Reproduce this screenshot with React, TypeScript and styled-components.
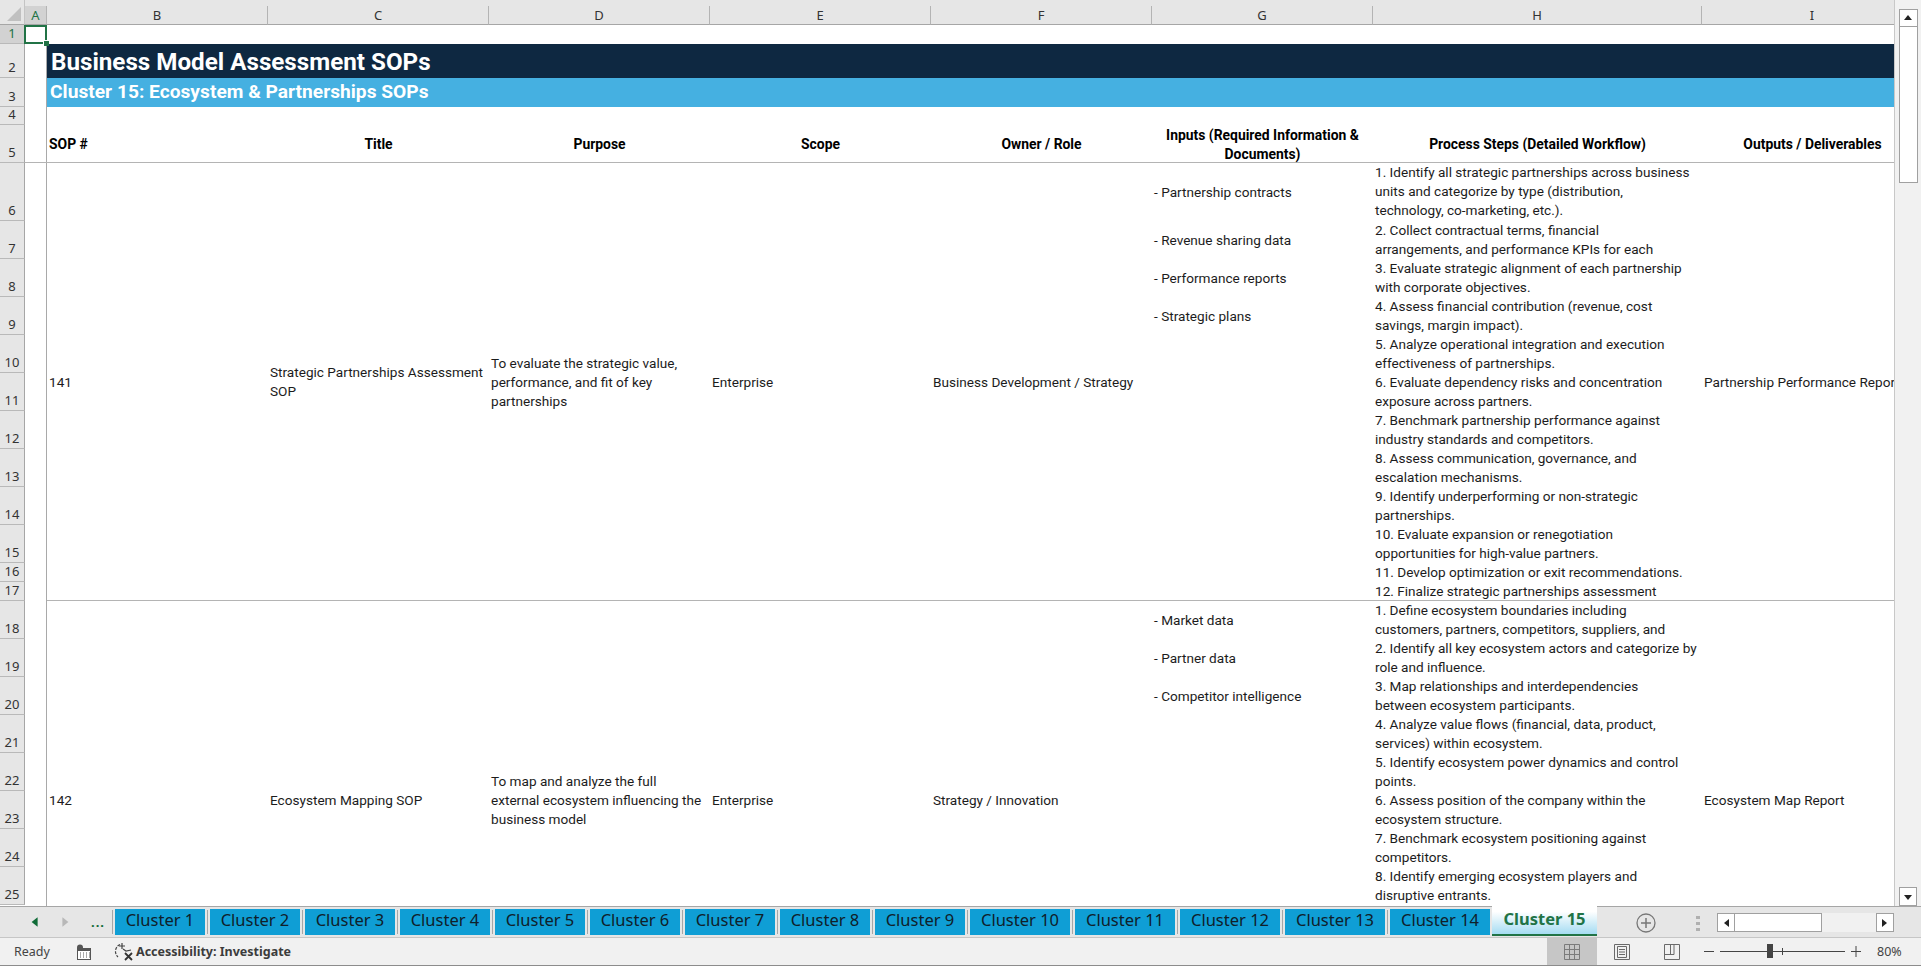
import * as React from 'react'
import styled, { createGlobalStyle } from 'styled-components'

const GlobalStyle = createGlobalStyle`
  html, body {
    margin: 0;
    padding: 0;
    background: #e6e6e6;
    overflow: hidden;
  }
`

const CELL_FONT = '"Roboto", "Liberation Sans", sans-serif'
const UI_FONT = '"Noto Sans", "Open Sans", sans-serif'
const GREEN = '#217346'

const rowTracks = [6, 19, 19, 34, 29, 18, 38, 58, 38, 38, 38, 38, 38, 38, 38, 38, 38, 19, 19, 38, 38, 38, 38, 38, 38, 38, 38, 94]
const colTracks = [25, 22, 221, 221, 221, 221, 221, 221, 329, 221]
const rowNumberLabels = Array.from({ length: 25 }, (_, i) => i + 1)
const columnLetters = ['A', 'B', 'C', 'D', 'E', 'F', 'G', 'H', 'I']

// grid line of sheet row n (tracks 1 and 2 are the column header)
const line = (row: number) => row + 2

const Window = styled.div`
  display: flex;
  flex-direction: column;
  width: 1921px;
  height: 966px;
  overflow: hidden;
  background: #e6e6e6;
`

const Main = styled.div`
  display: flex;
  height: 906px;
  flex-shrink: 0;
`

const SheetViewport = styled.div`
  width: 1894px;
  height: 906px;
  overflow: hidden;
`

const SheetGrid = styled.div`
  display: grid;
  grid-template-columns: ${colTracks.map(c => `${c}px`).join(' ')};
  grid-template-rows: ${rowTracks.map(r => `${r}px`).join(' ')};
  background: #ffffff;
  color: #1c1c1c;
  font-family: ${CELL_FONT};
  font-size: 13.6px;
  line-height: 19px;
`

const Corner = styled.div`
  grid-column: 1;
  grid-row: 1 / span 2;
  background: #e6e6e6;
  border-bottom: 1px solid #a6a6a6;
  border-right: 1px solid #c4c4c4;
  box-sizing: border-box;
  display: flex;
  align-items: flex-end;
  justify-content: flex-end;
  padding: 0 3px 3px 0;
`

const TopStrip = styled.div`
  grid-column: 2 / -1;
  grid-row: 1;
  background: #e6e6e6;
`

const ColumnHeader = styled.div<{ $col: number; $active?: boolean }>`
  grid-column: ${p => p.$col + 1};
  grid-row: 2;
  box-sizing: border-box;
  display: flex;
  align-items: center;
  justify-content: center;
  background: ${p => (p.$active ? '#d2d2d2' : '#e6e6e6')};
  color: ${p => (p.$active ? GREEN : '#333333')};
  border-right: 1px solid #b4b4b4;
  border-bottom: 1px solid #a6a6a6;
  font-family: ${UI_FONT};
  font-size: 13px;
`

const RowHeader = styled.div<{ $row: number; $active?: boolean }>`
  grid-column: 1;
  grid-row: ${p => line(p.$row)};
  box-sizing: border-box;
  display: flex;
  align-items: flex-end;
  justify-content: center;
  background: ${p => (p.$active ? '#d2d2d2' : '#e6e6e6')};
  color: ${p => (p.$active ? GREEN : '#333333')};
  border-right: 1px solid #a6a6a6;
  border-bottom: 1px solid #b9b9b9;
  font-family: ${UI_FONT};
  font-size: 13px;
  line-height: 19px;
`

const LeftGutterLine = styled.div`
  grid-column: 2;
  grid-row: 3 / -1;
  border-right: 1px solid #a9a9a9;
`

const SelectedCell = styled.div`
  grid-column: 2;
  grid-row: 3;
  position: relative;
  margin-left: -1px;
  box-sizing: border-box;
  border: 2px solid ${GREEN};
  z-index: 2;

  &::after {
    content: '';
    position: absolute;
    right: -4px;
    bottom: -4px;
    width: 5px;
    height: 5px;
    background: ${GREEN};
    border: 1px solid #ffffff;
    border-width: 1px 0 0 1px;
  }
`

const TitleBanner = styled.div`
  grid-column: 3 / -1;
  grid-row: 4;
  display: flex;
  align-items: center;
  padding: 2px 0 0 4px;
  background: #0e2841;
  color: #ffffff;
  font-size: 24.2px;
  font-weight: 700;
`

const ClusterBanner = styled.div`
  grid-column: 3 / -1;
  grid-row: 5;
  display: flex;
  align-items: center;
  padding: 0 0 2px 3px;
  background: #45b0e1;
  color: #ffffff;
  font-size: 19.2px;
  font-weight: 700;
`

const HeaderCell = styled.div<{ $col: number; $left?: boolean }>`
  grid-column: ${p => p.$col + 1};
  grid-row: 7;
  box-sizing: border-box;
  display: flex;
  align-items: center;
  justify-content: ${p => (p.$left ? 'flex-start' : 'center')};
  text-align: ${p => (p.$left ? 'left' : 'center')};
  padding: 1px 2px 0;
  color: #000000;
  font-size: 13.9px;
  font-weight: 700;
  white-space: nowrap;
`

const HeaderRule = styled.div<{ $row: number; $from: number }>`
  grid-column: ${p => p.$from} / -1;
  grid-row: ${p => line(p.$row)};
  border-bottom: 1px solid #b4b4b4;
`

const MergedCell = styled.div<{ $col: number; $from: number; $to: number }>`
  grid-column: ${p => p.$col + 1};
  grid-row: ${p => line(p.$from)} / ${p => line(p.$to) + 1};
  display: flex;
  align-items: center;
  padding: 0 2px;
  white-space: nowrap;
  min-width: 0;
`

const RowCell = styled.div<{ $col: number; $row: number; $top?: boolean }>`
  grid-column: ${p => p.$col + 1};
  grid-row: ${p => line(p.$row)};
  display: flex;
  align-items: ${p => (p.$top ? 'flex-start' : 'center')};
  padding: 0 2px;
  white-space: nowrap;
  min-width: 0;
  overflow: hidden;
`

const Scrollbar = styled.div`
  flex: 1;
  display: flex;
  flex-direction: column;
  align-items: center;
  box-sizing: border-box;
  padding-top: 9px;
  background: #f1f1f1;
  border-left: 1px solid #c8c8c8;
`

const ScrollButton = styled.div<{ $small?: boolean }>`
  box-sizing: border-box;
  display: flex;
  align-items: center;
  justify-content: center;
  flex-shrink: 0;
  background: #ffffff;
  border: 1px solid #a0a0a0;
  width: ${p => (p.$small ? '18px' : '19px')};
  height: ${p => (p.$small ? '19px' : '18px')};
`

const ScrollThumb = styled.div`
  box-sizing: border-box;
  width: 19px;
  height: 157px;
  background: #ffffff;
  border: 1px solid #a0a0a0;
  margin-top: -1px;
`

const ScrollSpacer = styled.div`
  flex: 1;
`

const TabBar = styled.div`
  display: flex;
  align-items: flex-start;
  height: 32px;
  flex-shrink: 0;
  box-sizing: border-box;
  background: #e6e6e6;
  border-top: 1px solid #a6a6a6;
  border-bottom: 1px solid #c6c6c6;
`

const TabNav = styled.div`
  display: flex;
  align-items: center;
  width: 110px;
  height: 26px;
  margin-top: 2px;
  flex-shrink: 0;
  box-sizing: border-box;
  padding-left: 28px;
`

const NavDots = styled.span`
  margin-left: 19px;
  color: #0f6b37;
  font-family: ${UI_FONT};
  font-size: 13px;
  font-weight: 700;
  letter-spacing: 1px;
  line-height: 18px;
`

const TabSeparator = styled.div`
  width: 1px;
  height: 24px;
  margin: 3px 2px 0;
  flex-shrink: 0;
  background: #a6a6a6;
`

const SheetTab = styled.div<{ $width: number }>`
  display: flex;
  align-items: center;
  justify-content: center;
  box-sizing: border-box;
  width: ${p => p.$width}px;
  height: 26px;
  margin-top: 2px;
  padding-bottom: 6px;
  flex-shrink: 0;
  background: #0f9ed5;
  color: #10202a;
  font-family: ${UI_FONT};
  font-size: 16.5px;
`

const ActiveTab = styled.div`
  display: flex;
  align-items: center;
  justify-content: center;
  box-sizing: border-box;
  width: 105px;
  height: 30px;
  margin: -1px 0 0 2px;
  flex-shrink: 0;
  padding-bottom: 3px;
  background: linear-gradient(#ffffff 20%, #a5dcf2);
  border-bottom: 2px solid ${GREEN};
  color: ${GREEN};
  font-family: ${UI_FONT};
  font-size: 16.5px;
  font-weight: 700;
`

const AddSheet = styled.div`
  display: flex;
  align-items: center;
  justify-content: center;
  width: 20px;
  height: 20px;
  margin: 6px 0 0 39px;
  flex-shrink: 0;
`

const SplitDots = styled.div`
  display: flex;
  flex-direction: column;
  gap: 3px;
  margin: 9px 0 0 40px;
  flex-shrink: 0;

  & > span {
    display: block;
    width: 4px;
    height: 3px;
    background: #b0b0b0;
  }
`

const HScroll = styled.div`
  display: flex;
  width: 177px;
  height: 19px;
  margin: 6px 0 0 17px;
  flex-shrink: 0;
  background: #f1f1f1;
`

const HThumb = styled.div`
  box-sizing: border-box;
  width: 88px;
  background: #ffffff;
  border: 1px solid #a0a0a0;
  margin-left: -1px;
`

const StatusBar = styled.div`
  display: flex;
  align-items: center;
  flex: 1;
  box-sizing: border-box;
  background: #f1f1f1;
  border-bottom: 1px solid #8c8c8c;
  font-family: ${UI_FONT};
  font-size: 12.5px;
  color: #444444;
`

const ReadyLabel = styled.span`
  width: 62px;
  padding-left: 14px;
  flex-shrink: 0;
`

const StatusIcon = styled.div<{ $gap: number }>`
  display: flex;
  margin-left: ${p => p.$gap}px;
  flex-shrink: 0;
`

const AccessibilityLabel = styled.span`
  margin-left: 2px;
  font-weight: 700;
  color: #3c3c3c;
`

const ViewSwitch = styled.div`
  display: flex;
  margin-left: auto;
  height: 100%;
`

const ViewButton = styled.div<{ $active?: boolean }>`
  display: flex;
  align-items: center;
  justify-content: center;
  width: 50px;
  height: 100%;
  background: ${p => (p.$active ? '#c6c6c6' : 'transparent')};
`

const ZoomControl = styled.div`
  display: flex;
  align-items: center;
  margin-left: 7px;
  width: 217px;
  flex-shrink: 0;
`

const ZoomMinus = styled.div`
  width: 10px;
  height: 1px;
  background: #444444;
`

const ZoomTrack = styled.div`
  position: relative;
  width: 125px;
  height: 1px;
  margin: 0 6px;
  background: #444444;
`

const ZoomThumb = styled.div`
  position: absolute;
  left: 47px;
  top: -7px;
  width: 6px;
  height: 14px;
  background: #444444;
`

const ZoomTick = styled.div`
  position: absolute;
  left: 62px;
  top: -3px;
  width: 1px;
  height: 7px;
  background: #444444;
`

const ZoomPlus = styled.div`
  display: flex;
`

const ZoomValue = styled.span`
  margin-left: 16px;
`

const Triangle = ({ dir, color = '#222222', size = 10 }: { dir: 'left' | 'right' | 'up' | 'down'; color?: string; size?: number }) => {
  const points = { left: '8,1 8,9 3,5', right: '2,1 2,9 7,5', up: '1,7 9,7 5,2', down: '1,3 9,3 5,8' }[dir]
  return (
    <svg width={size} height={size} viewBox="0 0 10 10">
      <polygon points={points} fill={color} />
    </svg>
  )
}

const MacroIcon = () => (
  <svg width="16" height="16" viewBox="0 0 16 16">
    <rect x="1.5" y="4.5" width="13" height="11" fill="#fff" stroke="#555" />
    <rect x="1" y="4" width="14" height="3" fill="#555" />
    <circle cx="4" cy="3.5" r="3" fill="#555" />
    <path d="M4 9h1M7 9h1M10 9h1M13 9h1M4 11h1M7 11h1M10 11h1M13 11h1M4 13h1M7 13h1M10 13h1M13 13h1" stroke="#555" strokeWidth="1" />
  </svg>
)

const AccessibilityIcon = () => (
  <svg width="20" height="20" viewBox="0 0 20 20" fill="none" stroke="#444" strokeWidth="1.2">
    <path d="M6 2.5A7.5 7.5 0 0 0 4 15" strokeDasharray="3 1.2" />
    <path d="M8 1v6M5 4h6M9 7l3 2 5-1" />
    <path d="M11 11l7 7M18 11l-7 7" strokeWidth="1.8" stroke="#333" />
  </svg>
)

const NormalViewIcon = () => (
  <svg width="16" height="16" viewBox="0 0 16 16" fill="none" stroke="#7b7b7b">
    <path d="M.5.5h15v15H.5zM5.5.5v15M10.5.5v15M.5 5.5h15M.5 10.5h15" />
  </svg>
)

const PageLayoutIcon = () => (
  <svg width="16" height="16" viewBox="0 0 16 16" fill="none" stroke="#6a6a6a">
    <path d="M.5.5h15v15H.5zM3.5 2.5h9v11h-9zM5 5.5h6M5 8h6M5 10.5h6" />
  </svg>
)

const PageBreakIcon = () => (
  <svg width="16" height="16" viewBox="0 0 16 16" fill="none" stroke="#6a6a6a">
    <path d="M.5.5h15v15H.5zM.5 10.5h9.5V.5M6.5.5v10" />
  </svg>
)

const AddIcon = () => (
  <svg width="20" height="20" viewBox="0 0 20 20" fill="none" stroke="#777">
    <circle cx="10" cy="10" r="9" strokeWidth="1.3" />
    <path d="M10 5v10M5 10h10" strokeWidth="1.5" />
  </svg>
)

const PlusIcon = () => (
  <svg width="10" height="11" viewBox="0 0 10 11" fill="none" stroke="#444">
    <path d="M5 0v11M0 5.5h10" />
  </svg>
)

type RowLines = { row: number; lines: string[] }

const processSteps: RowLines[] = [
  { row: 6, lines: ['1. Identify all strategic partnerships across business', 'units and categorize by type (distribution,', 'technology, co-marketing, etc.).'] },
  { row: 7, lines: ['2. Collect contractual terms, financial', 'arrangements, and performance KPIs for each'] },
  { row: 8, lines: ['3. Evaluate strategic alignment of each partnership', 'with corporate objectives.'] },
  { row: 9, lines: ['4. Assess financial contribution (revenue, cost', 'savings, margin impact).'] },
  { row: 10, lines: ['5. Analyze operational integration and execution', 'effectiveness of partnerships.'] },
  { row: 11, lines: ['6. Evaluate dependency risks and concentration', 'exposure across partners.'] },
  { row: 12, lines: ['7. Benchmark partnership performance against', 'industry standards and competitors.'] },
  { row: 13, lines: ['8. Assess communication, governance, and', 'escalation mechanisms.'] },
  { row: 14, lines: ['9. Identify underperforming or non-strategic', 'partnerships.'] },
  { row: 15, lines: ['10. Evaluate expansion or renegotiation', 'opportunities for high-value partners.'] },
  { row: 16, lines: ['11. Develop optimization or exit recommendations.'] },
  { row: 17, lines: ['12. Finalize strategic partnerships assessment'] },
  { row: 18, lines: ['1. Define ecosystem boundaries including', 'customers, partners, competitors, suppliers, and'] },
  { row: 19, lines: ['2. Identify all key ecosystem actors and categorize by', 'role and influence.'] },
  { row: 20, lines: ['3. Map relationships and interdependencies', 'between ecosystem participants.'] },
  { row: 21, lines: ['4. Analyze value flows (financial, data, product,', 'services) within ecosystem.'] },
  { row: 22, lines: ['5. Identify ecosystem power dynamics and control', 'points.'] },
  { row: 23, lines: ['6. Assess position of the company within the', 'ecosystem structure.'] },
  { row: 24, lines: ['7. Benchmark ecosystem positioning against', 'competitors.'] },
  { row: 25, lines: ['8. Identify emerging ecosystem players and', 'disruptive entrants.'] },
]

const inputs: { row: number; text: string }[] = [
  { row: 6, text: '- Partnership contracts' },
  { row: 7, text: '- Revenue sharing data' },
  { row: 8, text: '- Performance reports' },
  { row: 9, text: '- Strategic plans' },
  { row: 18, text: '- Market data' },
  { row: 19, text: '- Partner data' },
  { row: 20, text: '- Competitor intelligence' },
]

const sopRows = [
  {
    from: 6,
    to: 17,
    number: '141',
    title: ['Strategic Partnerships Assessment', 'SOP'],
    purpose: ['To evaluate the strategic value,', 'performance, and fit of key', 'partnerships'],
    scope: 'Enterprise',
    owner: 'Business Development / Strategy',
    output: 'Partnership Performance Report',
  },
  {
    from: 18,
    to: 26,
    number: '142',
    title: ['Ecosystem Mapping SOP'],
    purpose: ['To map and analyze the full', 'external ecosystem influencing the', 'business model'],
    scope: 'Enterprise',
    owner: 'Strategy / Innovation',
    output: 'Ecosystem Map Report',
  },
]

const headers: { col: number; lines: string[]; left?: boolean }[] = [
  { col: 2, lines: ['SOP #'], left: true },
  { col: 3, lines: ['Title'] },
  { col: 4, lines: ['Purpose'] },
  { col: 5, lines: ['Scope'] },
  { col: 6, lines: ['Owner / Role'] },
  { col: 7, lines: ['Inputs (Required Information &', 'Documents)'] },
  { col: 8, lines: ['Process Steps (Detailed Workflow)'] },
  { col: 9, lines: ['Outputs / Deliverables'] },
]

const Lines = ({ lines }: { lines: string[] }) => (
  <div>
    {lines.map(text => (
      <div key={text}>{text}</div>
    ))}
  </div>
)

const clusterTabs = Array.from({ length: 14 }, (_, i) => i + 1)

export default function App() {
  return (
    <Window>
      <GlobalStyle />
      <Main>
        <SheetViewport>
          <SheetGrid>
            <Corner>
              <svg width="14" height="14" viewBox="0 0 14 14">
                <polygon points="14,0 14,14 0,14" fill="#c0c0c0" />
              </svg>
            </Corner>
            <TopStrip />
            {columnLetters.map((letter, i) => (
              <ColumnHeader key={letter} $col={i + 1} $active={i === 0}>
                {letter}
              </ColumnHeader>
            ))}
            {rowNumberLabels.map(n => (
              <RowHeader key={n} $row={n} $active={n === 1}>
                {n}
              </RowHeader>
            ))}
            <LeftGutterLine />
            <SelectedCell />
            <TitleBanner>Business Model Assessment SOPs</TitleBanner>
            <ClusterBanner>Cluster 15: Ecosystem &amp; Partnerships SOPs</ClusterBanner>
            <HeaderRule $row={5} $from={2} />
            <HeaderRule $row={17} $from={3} />
            {headers.map(h => (
              <HeaderCell key={h.col} $col={h.col} $left={h.left}>
                <Lines lines={h.lines} />
              </HeaderCell>
            ))}
            {sopRows.map(sop => (
              <React.Fragment key={sop.number}>
                <MergedCell $col={2} $from={sop.from} $to={sop.to}>{sop.number}</MergedCell>
                <MergedCell $col={3} $from={sop.from} $to={sop.to}><Lines lines={sop.title} /></MergedCell>
                <MergedCell $col={4} $from={sop.from} $to={sop.to}><Lines lines={sop.purpose} /></MergedCell>
                <MergedCell $col={5} $from={sop.from} $to={sop.to}>{sop.scope}</MergedCell>
                <MergedCell $col={6} $from={sop.from} $to={sop.to}>{sop.owner}</MergedCell>
                <MergedCell $col={9} $from={sop.from} $to={sop.to}>{sop.output}</MergedCell>
              </React.Fragment>
            ))}
            {inputs.map(item => (
              <RowCell key={item.row} $col={7} $row={item.row}>{item.text}</RowCell>
            ))}
            {processSteps.map(step => (
              <RowCell key={step.row} $col={8} $row={step.row} $top>
                <Lines lines={step.lines} />
              </RowCell>
            ))}
          </SheetGrid>
        </SheetViewport>
        <Scrollbar>
          <ScrollButton><Triangle dir="up" /></ScrollButton>
          <ScrollThumb />
          <ScrollSpacer />
          <ScrollButton $small><Triangle dir="down" /></ScrollButton>
        </Scrollbar>
      </Main>
      <TabBar>
        <TabNav>
          <Triangle dir="left" color="#0f6b37" size={12} />
          <StatusIcon $gap={20}><Triangle dir="right" color="#b8b8b8" size={12} /></StatusIcon>
          <NavDots>...</NavDots>
        </TabNav>
        <TabSeparator />
        {clusterTabs.map(n => (
          <React.Fragment key={n}>
            <SheetTab $width={n < 10 ? 90 : 100}>Cluster {n}</SheetTab>
            {n < 14 && <TabSeparator />}
          </React.Fragment>
        ))}
        <ActiveTab>Cluster 15</ActiveTab>
        <AddSheet><AddIcon /></AddSheet>
        <SplitDots><span /><span /><span /></SplitDots>
        <HScroll>
          <ScrollButton $small><Triangle dir="left" /></ScrollButton>
          <HThumb />
          <ScrollSpacer />
          <ScrollButton $small><Triangle dir="right" /></ScrollButton>
        </HScroll>
      </TabBar>
      <StatusBar>
        <ReadyLabel>Ready</ReadyLabel>
        <MacroIcon />
        <StatusIcon $gap={22}><AccessibilityIcon /></StatusIcon>
        <AccessibilityLabel>Accessibility: Investigate</AccessibilityLabel>
        <ViewSwitch>
          <ViewButton $active><NormalViewIcon /></ViewButton>
          <ViewButton><PageLayoutIcon /></ViewButton>
          <ViewButton><PageBreakIcon /></ViewButton>
        </ViewSwitch>
        <ZoomControl>
          <ZoomMinus />
          <ZoomTrack>
            <ZoomThumb />
            <ZoomTick />
          </ZoomTrack>
          <ZoomPlus><PlusIcon /></ZoomPlus>
          <ZoomValue>80%</ZoomValue>
        </ZoomControl>
      </StatusBar>
    </Window>
  )
}
